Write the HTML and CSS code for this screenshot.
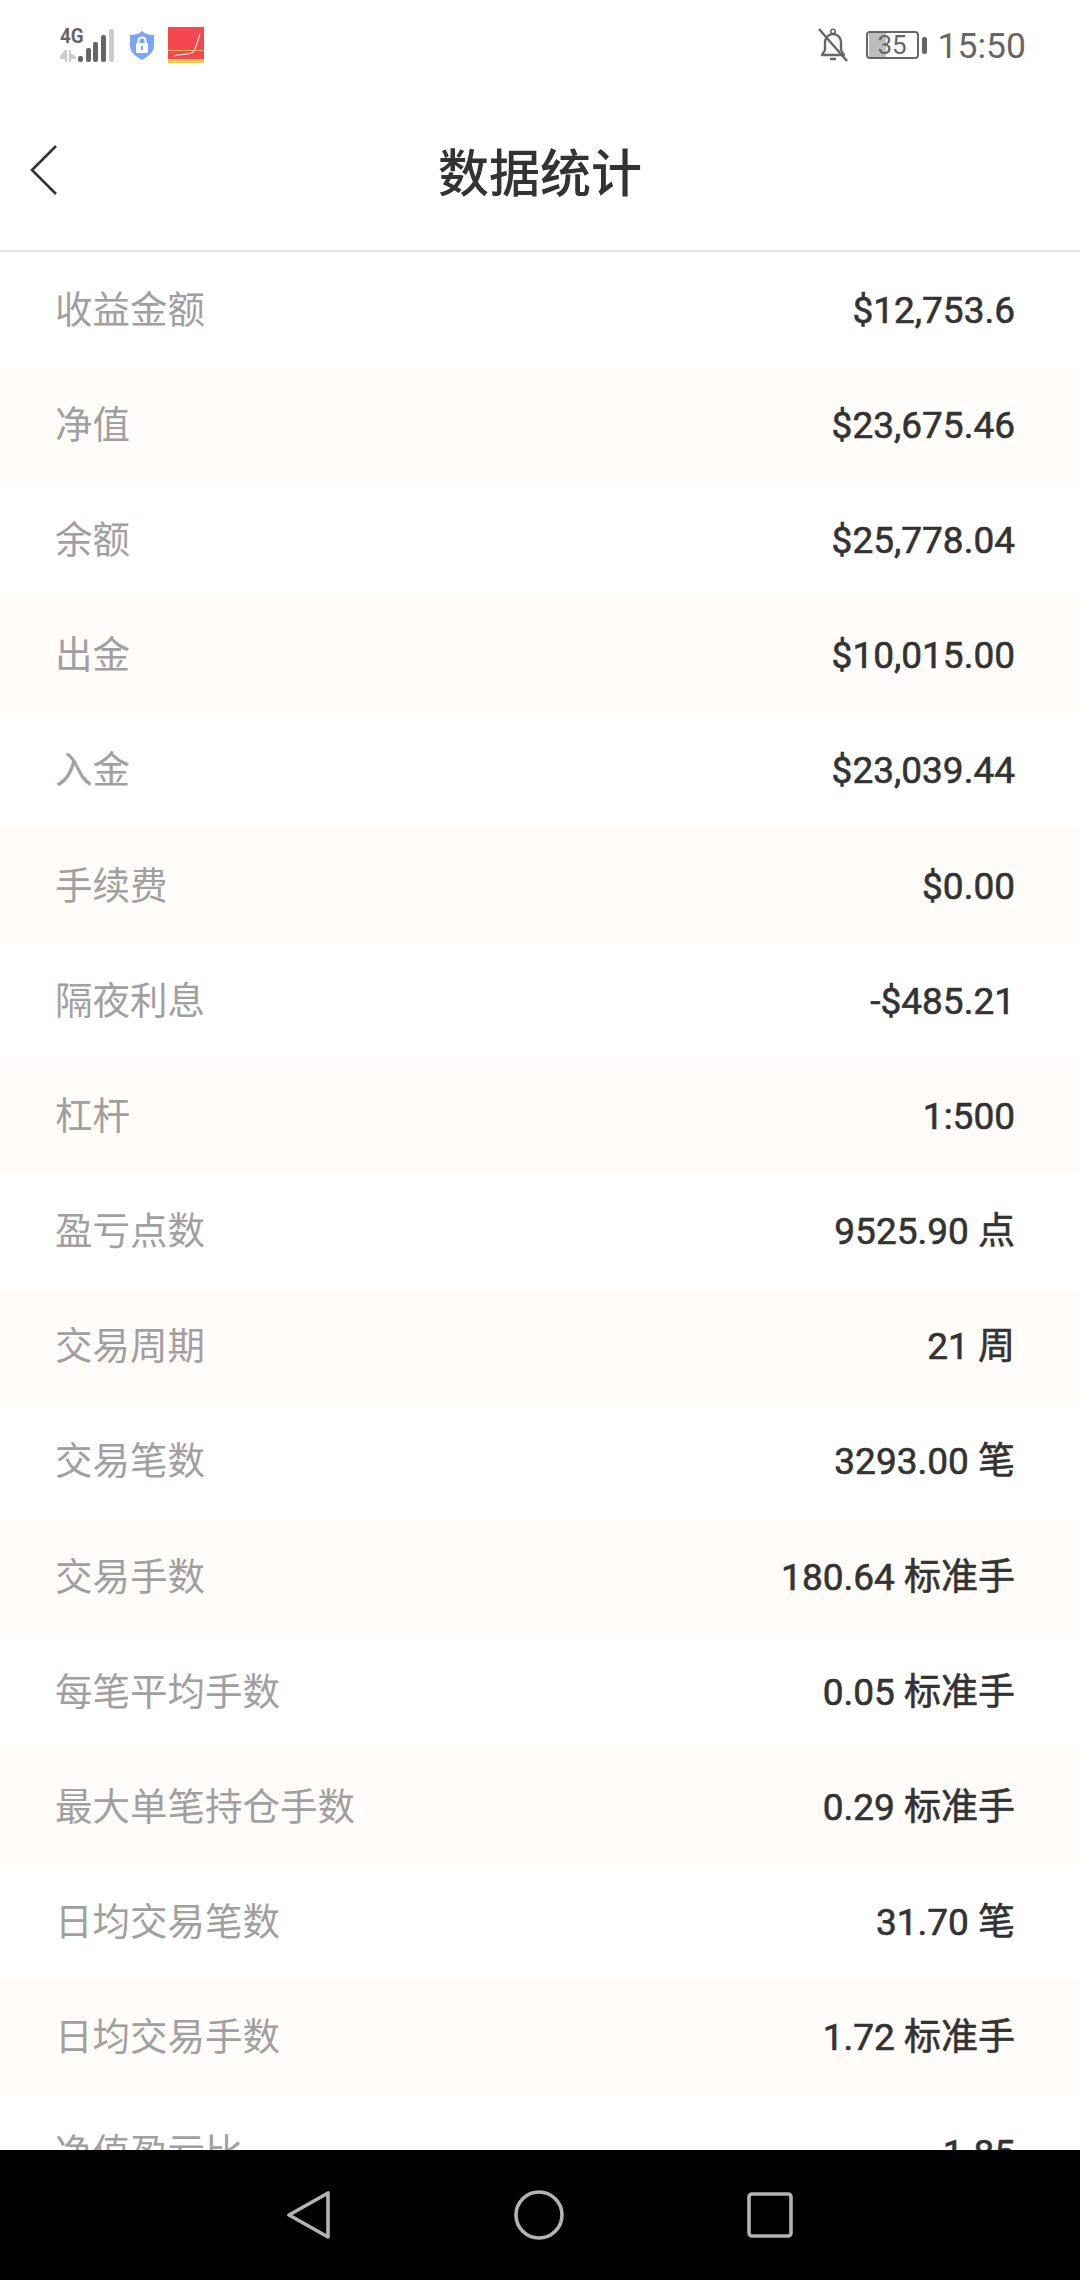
FILE: index.html
```html
<!DOCTYPE html>
<html lang="en">
<head>
    <meta charset="UTF-8">
    <meta name="viewport" content="width=device-width, initial-scale=1.0">
    <title>数据统计</title>
    <link rel="stylesheet" href="styles.css">
</head>
<body>
    <div class="app">
        <div class="status-bar">
            <div class="status-left">
                <div class="network">
                    <div class="network-text">
                        <span class="network-type">4G</span>
                        <svg class="network-arrows" width="16" height="12" viewBox="0 0 16 12">
                            <path d="M6 0 L0 8 H6 Z M6 0 V12" fill="#ccc" stroke="#ccc" stroke-width="2"/>
                            <path d="M10 12 V0 M10 4 L16 8 H10 Z" fill="#ccc" stroke="#ccc" stroke-width="2"/>
                        </svg>
                    </div>
                    <div class="signal">
                        <span class="bar bar-1"></span>
                        <span class="bar bar-2"></span>
                        <span class="bar bar-3"></span>
                        <span class="bar bar-4"></span>
                        <span class="bar bar-5"></span>
                    </div>
                </div>
                <svg class="shield" width="24" height="29" viewBox="0 0 24 29">
                    <path d="M12 0 C15 3 20 4 24 4 V15 C24 22 17 26 12 29 C7 26 0 22 0 15 V4 C4 4 9 3 12 0 Z" fill="#7aa6f3"/>
                    <rect x="6" y="12" width="12" height="10" rx="1" fill="#fff"/>
                    <path d="M8.5 12 V9.5 C8.5 5.5 15.5 5.5 15.5 9.5 V12" fill="none" stroke="#fff" stroke-width="2"/>
                    <rect x="11" y="15" width="2" height="4" fill="#7aa6f3"/>
                </svg>
                <svg class="app-icon" width="36" height="36" viewBox="0 0 36 36">
                    <rect width="36" height="36" fill="#f5474f"/>
                    <rect y="32" width="36" height="4" fill="#f7c94b"/>
                    <path d="M0 23.5 H36" stroke="#f7b04b" stroke-width="1"/>
                    <path d="M6 29 C14 26 20 29 25 25 C28 22 30 14 32 6" fill="none" stroke="#fbdcd6" stroke-width="1.2"/>
                </svg>
            </div>
            <div class="status-right">
                <svg class="bell" width="30" height="34" viewBox="0 0 30 34">
                    <path d="M4 27 H26 L23 22 V15 C23 9 19 6 15 6 C11 6 7 9 7 15 V22 Z" fill="none" stroke="#666" stroke-width="2.4" stroke-linejoin="round"/>
                    <circle cx="15" cy="3.5" r="2.2" fill="none" stroke="#666" stroke-width="1.6"/>
                    <path d="M12 31 H18" stroke="#666" stroke-width="2.4"/>
                    <path d="M1 1 L29 33" stroke="#666" stroke-width="2.4"/>
                </svg>
                <div class="battery">
                    <div class="battery-body">
                        <div class="battery-level"></div>
                        <span class="battery-text">35</span>
                    </div>
                    <div class="battery-nub"></div>
                </div>
                <span class="clock">15:50</span>
            </div>
        </div>

        <div class="title-bar">
            <svg class="back" width="28" height="50" viewBox="0 0 28 50">
                <path d="M26 1 L2 25 L26 49" fill="none" stroke="#333" stroke-width="2.6"/>
            </svg>
            <h1>数据统计</h1>
        </div>

        <div class="list">
            <div class="row"><span class="label">收益金额</span><span class="value">$12,753.6</span></div>
            <div class="row"><span class="label">净值</span><span class="value">$23,675.46</span></div>
            <div class="row"><span class="label">余额</span><span class="value">$25,778.04</span></div>
            <div class="row"><span class="label">出金</span><span class="value">$10,015.00</span></div>
            <div class="row"><span class="label">入金</span><span class="value">$23,039.44</span></div>
            <div class="row"><span class="label">手续费</span><span class="value">$0.00</span></div>
            <div class="row"><span class="label">隔夜利息</span><span class="value">-$485.21</span></div>
            <div class="row"><span class="label">杠杆</span><span class="value">1:500</span></div>
            <div class="row"><span class="label">盈亏点数</span><span class="value">9525.90 点</span></div>
            <div class="row"><span class="label">交易周期</span><span class="value">21 周</span></div>
            <div class="row"><span class="label">交易笔数</span><span class="value">3293.00 笔</span></div>
            <div class="row"><span class="label">交易手数</span><span class="value">180.64 标准手</span></div>
            <div class="row"><span class="label">每笔平均手数</span><span class="value">0.05 标准手</span></div>
            <div class="row"><span class="label">最大单笔持仓手数</span><span class="value">0.29 标准手</span></div>
            <div class="row"><span class="label">日均交易笔数</span><span class="value">31.70 笔</span></div>
            <div class="row"><span class="label">日均交易手数</span><span class="value">1.72 标准手</span></div>
            <div class="row"><span class="label">净值盈亏比</span><span class="value">1.85</span></div>
        </div>

        <div class="nav-bar">
            <svg width="44" height="50" viewBox="0 0 44 50">
                <path d="M41 3 V47 L2 25 Z" fill="none" stroke="#b3b3b3" stroke-width="3.6" stroke-linejoin="round"/>
            </svg>
            <svg width="50" height="50" viewBox="0 0 50 50">
                <circle cx="25" cy="25" r="23" fill="none" stroke="#b3b3b3" stroke-width="3.6"/>
            </svg>
            <svg width="46" height="46" viewBox="0 0 46 46">
                <rect x="2" y="2" width="42" height="42" rx="3" fill="none" stroke="#b3b3b3" stroke-width="3.6"/>
            </svg>
        </div>
    </div>
</body>
</html>
```

FILE: styles.css
```css
* {
    box-sizing: border-box;
}
body {
    margin: 0;
    padding: 0;
    background: #fff;
    font-family: Roboto, "Noto Sans CJK SC", sans-serif;
}
.app {
    display: flex;
    flex-direction: column;
    width: 1080px;
    height: 2280px;
    overflow: hidden;
}

/* status bar */
.status-bar {
    display: flex;
    justify-content: space-between;
    align-items: center;
    height: 90px;
    padding: 0 54px 0 60px;
}
.status-left, .status-right {
    display: flex;
    align-items: center;
}
.network {
    display: flex;
    align-items: flex-end;
}
.network-text {
    display: flex;
    flex-direction: column;
    width: 18px;
}
.network-type {
    font-size: 21px;
    line-height: 15px;
    font-weight: 700;
    color: #666;
    white-space: nowrap;
    transform: scaleX(0.9);
    transform-origin: left;
}
.network-arrows {
    margin-top: 6px;
}
.signal {
    display: flex;
    align-items: flex-end;
    gap: 2.7px;
    height: 33px;
}
.bar {
    width: 5px;
    border-radius: 2px;
    background: #666;
}
.bar-1 { height: 6px; }
.bar-2 { height: 14px; }
.bar-3 { height: 20px; }
.bar-4 { height: 27px; }
.bar-5 { height: 33px; background: #ccc; }
.shield {
    margin-left: 16px;
}
.app-icon {
    margin-left: 14px;
}
.bell {
    margin-right: 18px;
}
.battery {
    display: flex;
    align-items: center;
    gap: 3px;
}
.battery-body {
    position: relative;
    width: 53px;
    height: 28px;
    border: 2px solid #666;
    border-radius: 4px;
}
.battery-level {
    width: 35%;
    height: 100%;
    margin-left: 1px;
    background: #bdbdbd;
}
.battery-text {
    position: absolute;
    top: 0;
    left: 0;
    width: 100%;
    text-align: center;
    font-size: 26px;
    line-height: 24px;
    color: #666;
}
.battery-nub {
    width: 5px;
    height: 17px;
    border-radius: 2px;
    background: #666;
}
.clock {
    margin-left: 11px;
    padding-top: 2px;
    font-size: 35.5px;
    color: #666;
}

/* title */
.title-bar {
    position: relative;
    display: flex;
    justify-content: center;
    align-items: center;
    height: 162px;
    border-bottom: 2px solid #e3e3e3;
}
.title-bar h1 {
    margin: 0;
    font-size: 51px;
    font-weight: 500;
    color: #333;
}
.back {
    position: absolute;
    left: 30px;
    top: 55px;
}

/* list */
.list {
    flex: 1;
    overflow: hidden;
}
.row {
    display: flex;
    justify-content: space-between;
    align-items: center;
    height: 115.2px;
    padding: 2px 65px 0 55px;
}
.row:nth-child(even) {
    background: #fffcf9;
}
.label {
    margin-bottom: 2px;
    font-size: 37.5px;
    line-height: 44px;
    color: #a0a0a0;
}
.value {
    font-size: 37px;
    line-height: 44px;
    color: #333;
    -webkit-text-stroke: 0.6px #333;
}

/* nav */
.nav-bar {
    display: flex;
    justify-content: center;
    align-items: center;
    gap: 183px;
    height: 130px;
    background: #000;
}
```
